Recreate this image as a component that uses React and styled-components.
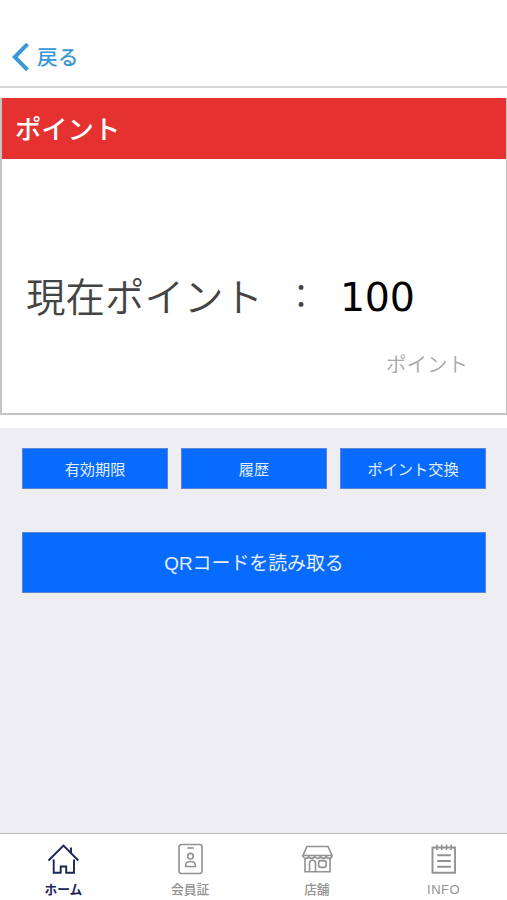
import React from "react";
import styled, { createGlobalStyle } from "styled-components";

const GlobalStyle = createGlobalStyle`
  * {
    box-sizing: border-box;
  }
  body {
    margin: 0;
    font-family: "Noto Sans CJK JP", sans-serif;
  }
`;

const Screen = styled.div`
  display: flex;
  flex-direction: column;
  height: 900px;
  background: #eeedf2;
  overflow: hidden;
`;

const Header = styled.header`
  height: 88px;
  padding: 27px 0 0 11px;
  display: flex;
  align-items: center;
  background: #fff;
  border-bottom: 2px solid #d9d9da;
`;

const BackButton = styled.a`
  display: flex;
  align-items: center;
  gap: 7px;
  color: #3b98d6;
  font-size: 20.7px;
  font-weight: 500;
  line-height: 30px;
`;

const BackLabel = styled.span`
  padding-bottom: 1px;
`;

const CardArea = styled.section`
  height: 340px;
  padding: 10px 0 12px;
  background: #fff;
`;

const Card = styled.div`
  height: 317px;
  border: solid #c4c4c4;
  border-width: 0 1px 2px 2px;
`;

const CardTitle = styled.h1`
  height: 61px;
  margin: 0;
  padding-left: 13px;
  background: #e53130;
  color: #fff;
  font-size: 26.3px;
  font-weight: 500;
  line-height: 59px;
`;

const PointRow = styled.div`
  display: flex;
  align-items: center;
  height: 60px;
  margin-top: 107px;
  padding-left: 24px;
  color: #444;
  font-size: 39.5px;
  font-weight: 350;
`;

const PointLabel = styled.span`
  padding-bottom: 3px;
`;

const Colon = styled.span`
  width: 40px;
  margin-left: 18px;
  padding-bottom: 4px;
  font-size: 33px;
  text-align: center;
`;

const Amount = styled.span`
  margin-left: 19px;
  padding-top: 2px;
  color: #000;
  font-family: "DejaVu Sans", sans-serif;
  font-size: 39.5px;
  font-weight: 400;
  letter-spacing: -0.3px;
`;

const Unit = styled.div`
  margin: 22px 38px 0 0;
  color: #a8a8a8;
  font-size: 20.5px;
  font-weight: 350;
  line-height: 30px;
  text-align: right;
`;

const Actions = styled.main`
  flex: 1;
  padding: 20px 21px 0 22px;
`;

const ButtonRow = styled.div`
  display: grid;
  grid-template-columns: repeat(3, 1fr);
  gap: 13px;
  margin-bottom: 43px;
`;

const Button = styled.button`
  display: block;
  width: 100%;
  height: ${(props) => (props.$large ? "61px" : "41px")};
  padding: 0 0 ${(props) => (props.$large ? "3px" : "1px")};
  border: 1px solid #5c84d2;
  background: #086bff;
  color: #e3efff;
  font-family: "Liberation Sans", "Noto Sans CJK JP", sans-serif;
  font-size: ${(props) => (props.$large ? "18.9px" : "15.2px")};
  font-weight: 400;
`;

const TabBar = styled.nav`
  display: grid;
  grid-template-columns: repeat(4, 1fr);
  height: 67px;
  border-top: 1px solid #bbb;
  background: #fff;
`;

const Tab = styled.a`
  display: flex;
  flex-direction: column;
  align-items: center;
  padding-top: 9px;
  color: ${(props) => (props.$active ? "#1c2657" : "#929292")};
  font-size: 12.7px;
  font-weight: ${(props) => (props.$active ? 700 : 500)};
  line-height: 20px;

  svg {
    margin-bottom: 4px;
  }
`;

const InfoLabel = styled.span`
  padding-top: 1px;
  font-family: "Liberation Sans", sans-serif;
  font-size: 13px;
  font-weight: 400;
  letter-spacing: 0.5px;
`;

const Icon = ({ children }) => (
  <svg
    width="32"
    height="32"
    viewBox="0 0 32 32"
    fill="none"
    stroke="currentColor"
    strokeWidth="1.6"
  >
    {children}
  </svg>
);

const HomeIcon = () => (
  <Icon>
    <path d="M1.5 17.5 16.5 2.5l14.8 15M24 9.8V4.5" strokeWidth="1.9" />
    <path d="M6.7 16.5v13.3h7v-6.3h5.5v6.3H27V16.5" strokeWidth="1.9" />
  </Icon>
);

const MemberIcon = () => (
  <Icon>
    <rect x="5" y="1.5" width="23" height="29" rx="2.5" />
    <path d="M13.3 5h6.5" />
    <circle cx="16.5" cy="13.2" r="2.8" />
    <path d="M11.6 23.5v-1c0-2.3 2-4 4.9-4s4.9 1.7 4.9 4v1z" />
  </Icon>
);

const ShopIcon = () => (
  <Icon>
    <path d="M6 3.5h21l4 9H2z" />
    <path d="M2 12.5a2.9 2.9 0 0 0 5.8 0a2.9 2.9 0 0 0 5.8 0a2.9 2.9 0 0 0 5.8 0a2.9 2.9 0 0 0 5.8 0a2.9 2.9 0 0 0 5.8 0" />
    <path d="M4 15.5v13.2h25V15.5M8.5 28.5v-8.3c0-2 1.2-3 3-3s3 1 3 3v8.3" />
    <rect x="17.6" y="17.6" width="7.6" height="6.8" rx="2.4" />
  </Icon>
);

const NoteIcon = () => (
  <Icon>
    <path d="M4.5 4.5h22.5v25.3H4.5z" strokeWidth="1.9" />
    <path d="M9 1.5V7M13.7 1.5V7M18.5 1.5V7M23.2 1.5V7" />
    <path d="M9.2 12.2h13.6M9.2 18h13.6M9.2 23.8h13.6" strokeWidth="1.9" />
  </Icon>
);

const App = () => (
  <Screen>
    <GlobalStyle />
    <Header>
      <BackButton>
        <svg width="19" height="30" viewBox="0 0 19 30" fill="none" stroke="currentColor" strokeWidth="4">
          <path d="M16.5 2.2 3.8 15l12.7 12.8" />
        </svg>
        <BackLabel>戻る</BackLabel>
      </BackButton>
    </Header>
    <CardArea>
      <Card>
        <CardTitle>ポイント</CardTitle>
        <PointRow>
          <PointLabel>現在ポイント</PointLabel>
          <Colon>：</Colon>
          <Amount>100</Amount>
        </PointRow>
        <Unit>ポイント</Unit>
      </Card>
    </CardArea>
    <Actions>
      <ButtonRow>
        <Button>有効期限</Button>
        <Button>履歴</Button>
        <Button>ポイント交換</Button>
      </ButtonRow>
      <Button $large>QRコードを読み取る</Button>
    </Actions>
    <TabBar>
      <Tab $active>
        <HomeIcon />
        ホーム
      </Tab>
      <Tab>
        <MemberIcon />
        会員証
      </Tab>
      <Tab>
        <ShopIcon />
        店舗
      </Tab>
      <Tab>
        <NoteIcon />
        <InfoLabel>INFO</InfoLabel>
      </Tab>
    </TabBar>
  </Screen>
);

export default App;
